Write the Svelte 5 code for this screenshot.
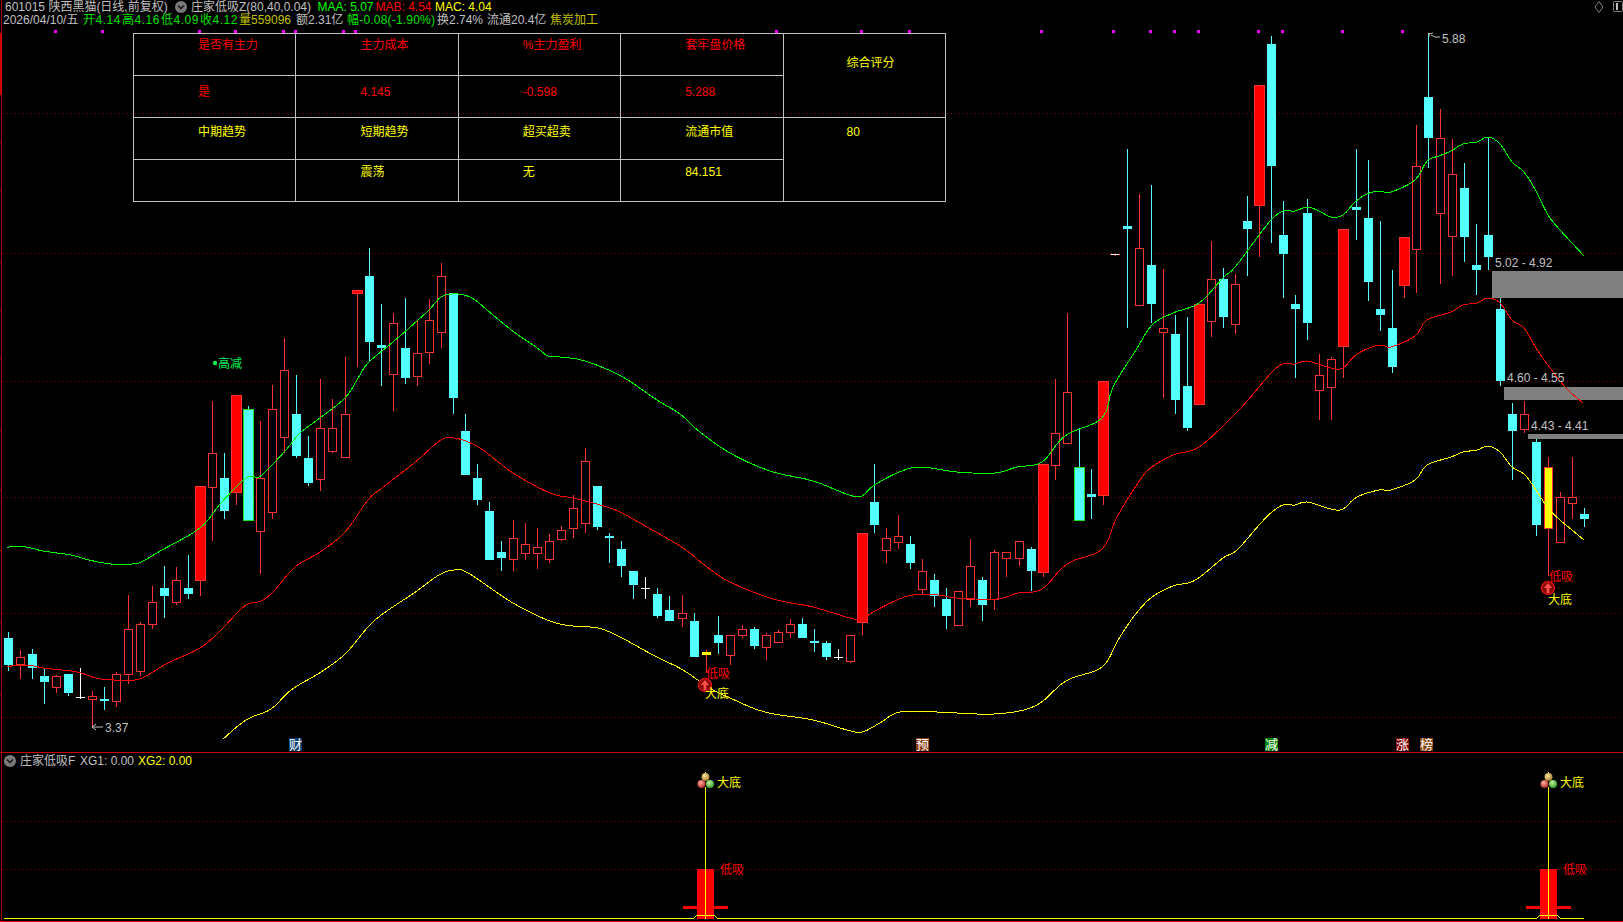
<script>
  const cyan = '#54ffff';
  // [kind, high, bodyTop, bodyBottom, low]; c cyan, r hollow red, R solid red, g cyan with green edge, w white doji, y flat yellow, Y yellow with red edge, d dash
  const raw = [
    ['c',632,638,665,671],['r',650,657,664,679],['c',649,654,668,679],['c',669,676,682,704],['r',675,676,687,693],['c',674,674,693,696],
    ['w',668,697,698,699],['r',691,696,699,727],['c',687,699,701,710],['r',672,674,701,707],['r',595,629,674,684],['r',622,624,671,676],
    ['r',586,602,624,629],['c',566,588,596,618],['r',567,580,602,605],['c',555,588,594,599],['R',486,486,580,596],['r',401,453,487,541],
    ['c',453,478,511,519],['R',395,395,492,505],['g',406,409,520,520],['r',421,478,531,574],['r',385,409,512,519],['r',338,370,437,453],
    ['c',375,414,456,458],['c',436,458,483,486],['r',379,428,479,491],['r',399,428,451,453],['r',357,414,457,457],['R',290,290,293,367],
    ['c',248,276,342,362],['c',304,345,348,386],['r',313,323,374,411],['c',298,348,378,384],['r',321,353,376,386],['r',299,320,352,364],
    ['r',263,276,332,348],['c',293,293,398,414],['c',414,431,475,475],['c',464,478,500,505],['c',502,511,560,560],['c',541,552,558,571],
    ['r',520,538,559,571],['r',523,544,553,560],['r',528,547,553,569],['r',534,541,559,563],['r',526,530,539,541],['r',495,508,528,538],
    ['r',448,461,523,533],['c',486,486,527,530],['c',533,536,538,563],['c',541,549,566,577],['c',571,571,585,599],['w',577,588,589,599],
    ['c',588,594,616,618],['c',596,610,621,621],['r',595,613,618,627],['c',613,621,657,657],['y',650,652,655,673],['c',616,635,643,654],
    ['r',635,635,655,665],['r',625,629,635,638],['c',627,629,646,649],['r',633,635,647,660],['r',630,632,642,643],['r',619,624,632,638],
    ['c',618,624,638,638],['c',629,641,643,652],['c',641,643,657,660],['w',649,657,658,660],['r',635,635,661,663],['R',533,533,622,635],
    ['c',464,502,525,533],['r',528,538,550,563],['r',515,536,542,549],['c',536,544,563,569],['r',559,571,589,594],['c',574,580,596,607],
    ['c',588,599,616,629],['r',591,591,625,625],['r',539,566,599,607],['c',577,580,605,621],['r',550,552,599,610],['r',552,552,558,577],
    ['r',541,541,558,566],['c',547,549,571,591],['R',464,464,572,577],['r',379,433,465,480],['r',313,392,443,443],['g',428,467,520,520],
    ['c',469,494,497,519],['R',381,381,495,505],['d',254,254,256,256],['c',149,226,229,328],['r',194,248,305,305],['c',185,265,304,323],
    ['r',269,328,332,398],['c',315,334,400,414],['c',317,386,428,431],['R',304,304,404,404],['r',241,279,321,337],['c',268,279,317,328],
    ['r',274,284,324,334],['c',196,221,229,276],['R',85,85,205,257],['c',36,44,166,243],['c',201,235,254,298],['c',295,304,309,378],
    ['c',199,213,323,340],['r',354,375,390,420],['r',357,359,387,420],['R',229,229,346,378],['c',149,207,210,240],['c',160,218,282,301],
    ['c',221,309,315,331],['c',270,328,367,373],['R',237,237,285,298],['r',125,166,249,293],['c',33,97,138,168],['r',109,138,213,284],
    ['r',139,174,236,276],['c',163,188,237,262],['c',224,265,270,295],['c',137,235,257,270],['c',298,309,381,386],['c',403,414,431,480],
    ['r',401,414,429,433],['c',439,442,525,536],['Y',457,467,528,576],['r',492,497,542,542],['r',457,497,503,519],['c',508,514,519,527]
  ];
  const candles = raw.map(([kind, high, top, bottom, low], i) => ({
    kind, high, top, bottom, low, x: Math.round(7.5 + 12.036 * i)
  }));
  const wickColour = { c: cyan, g: cyan, w: '#ffffff', r: '#ff3232', R: '#ff3232', y: '#ff3232', Y: '#ff3232', d: '#ff3232' };

  // Catmull-Rom through the read-off points, resampled so that the averages curve as they do on the terminal
  function smooth(a) {
    const out = [];
    for (let i = 0; i < a.length - 1; i++) {
      const p0 = a[Math.max(i - 1, 0)], p1 = a[i], p2 = a[i + 1], p3 = a[Math.min(i + 2, a.length - 1)];
      const steps = Math.max(2, Math.round((p2[0] - p1[0]) / 3));
      for (let s = 0; s < steps; s++) {
        const t = s / steps, t2 = t * t, t3 = t2 * t;
        const f = (k) => 0.5 * (2 * p1[k] + (p2[k] - p0[k]) * t + (2 * p0[k] - 5 * p1[k] + 4 * p2[k] - p3[k]) * t2 + (3 * p1[k] - p0[k] - 3 * p2[k] + p3[k]) * t3);
        out.push(`${f(0).toFixed(1)},${f(1).toFixed(1)}`);
      }
    }
    const last = a[a.length - 1];
    out.push(last.join(','));
    return out.join(' ');
  }
  const green = smooth([[7,547],[26,547],[43,551],[71,555],[89,560],[111,564],[132,564],[141,562],[162,550],[200,528],[221,503],[246,478],[259,477],[270,467],[286,450],[300,433],[320,418],[345,398],[357,380],[368,363],[393,342],[418,320],[429,310],[441,297],[452,294],[464,295],[475,300],[493,315],[514,332],[536,347],[548,356],[560,357],[585,361],[621,376],[657,400],[680,414],[700,432],[730,453],[770,471],[813,481],[849,495],[862,496],[873,486],[897,473],[920,467],[957,472],[995,473],[1017,467],[1042,462],[1065,436],[1102,418],[1113,387],[1136,350],[1152,325],[1173,313],[1199,303],[1223,278],[1235,267],[1260,234],[1272,219],[1283,211],[1295,211],[1307,207],[1319,211],[1331,217],[1343,215],[1355,202],[1367,194],[1379,191],[1391,192],[1415,180],[1427,161],[1439,156],[1451,151],[1463,144],[1477,142],[1488,137],[1500,144],[1512,162],[1524,172],[1536,191],[1548,215],[1560,230],[1572,243],[1584,256]]);
  const red = smooth([[7,666],[34,666],[43,668],[77,672],[96,678],[114,680],[139,679],[168,663],[200,648],[220,631],[238,612],[248,604],[261,601],[273,592],[295,567],[320,552],[345,532],[368,500],[382,488],[414,463],[441,440],[454,438],[468,442],[483,450],[513,473],[550,493],[573,498],[600,505],[620,512],[647,527],[683,548],[707,567],[730,582],[773,599],[813,607],[850,618],[862,619],[873,612],[897,600],[913,595],[938,595],[957,598],[997,599],[1018,593],[1042,589],[1067,564],[1102,549],[1117,517],[1140,480],[1152,467],[1173,455],[1199,447],[1233,416],[1248,400],[1272,372],[1283,364],[1295,364],[1307,361],[1331,368],[1343,368],[1357,354],[1379,345],[1391,347],[1415,336],[1427,320],[1451,312],[1463,305],[1477,303],[1488,298],[1500,303],[1512,320],[1524,328],[1536,348],[1548,365],[1565,387],[1583,403]]);
  const yellow = smooth([[223,739],[246,720],[271,709],[291,690],[321,672],[345,654],[368,627],[384,613],[414,593],[439,575],[454,570],[468,573],[513,603],[550,621],[573,626],[598,628],[620,637],[653,655],[683,670],[708,687],[730,698],[765,712],[813,720],[847,730],[862,732],[880,723],[900,712],[937,712],[994,714],[1035,706],[1066,681],[1102,667],[1118,640],[1135,615],[1152,597],[1173,586],[1188,583],[1200,577],[1223,558],[1237,550],[1260,524],[1272,512],[1283,505],[1295,505],[1307,502],[1331,509],[1343,509],[1357,497],[1379,490],[1391,490],[1415,480],[1427,465],[1451,457],[1463,452],[1477,450],[1488,446],[1500,452],[1512,467],[1524,474],[1536,490],[1548,508],[1560,520],[1572,530],[1584,540]]);

  const gridMain = [113, 253, 381, 497, 613, 717];
  const gridSub = [821, 869];
  const marks = [55,102,199,235,283,295,343,355,776,861,909,1041,1113,1150,1174,1198,1258,1282,1342,1402];
  const axisTicks = [142,190,262,310,358,430,490,550,622,694];
  const zones = [
    { x: 1492, y: 271, h: 27, label: '5.02 - 4.92', lx: 1495, ly: 267 },
    { x: 1504, y: 387, h: 13, label: '4.60 - 4.55', lx: 1507, ly: 382 },
    { x: 1528, y: 434, h: 5, label: '4.43 - 4.41', lx: 1531, ly: 430 }
  ];
  const badges = [
    { x: 289, t: '财', c: '#0a3f73' },
    { x: 916, t: '预', c: '#8a3c14' },
    { x: 1265, t: '减', c: '#008000' },
    { x: 1396, t: '涨', c: '#800000' },
    { x: 1420, t: '榜', c: '#804000' }
  ];
  const lows = [
    { cx: 705, cy: 685, tx: 706, ty1: 678, ty2: 698 },
    { cx: 1548, cy: 588, tx: 1549, ty1: 581, ty2: 604 }
  ];
  const signals = [
    { x: 705, big: 717, small: 720 },
    { x: 1548, big: 1560, small: 1563 }
  ];
  const table = [
    { cls: 'red r1', cells: ['是否有主力', '主力成本', '%主力盈利', '套牢盘价格'] },
    { cls: 'red r2', cells: ['是', '4.145', '-0.598', '5.288'] },
    { cls: 'yel r3', cells: ['中期趋势', '短期趋势', '超买超卖', '流通市值'] },
    { cls: 'yel r4', cells: ['', '震荡', '无', '84.151'] }
  ];
</script>

{#snippet chevron()}
  <svg class="chev" width="12" height="12" viewBox="0 0 12 12">
    <circle cx="6" cy="6" r="6" fill="#7a7a7a" />
    <path d="M3 4.5 L6 7.5 L9 4.5" fill="none" stroke="#1c1c1c" stroke-width="1.6" />
  </svg>
{/snippet}

<div class="terminal">
  <section class="main-pane">
    <svg class="canvas" width="1623" height="752" viewBox="0 0 1623 752">
      <g shape-rendering="crispEdges">
        {#each gridMain as y}
          <line x1="3" x2="1623" y1={y + 0.5} y2={y + 0.5} class="grid" />
        {/each}
        <line x1="1.5" x2="1.5" y1="0" y2="752" stroke="#b00000" />
        <rect x="0" y="33" width="2" height="62" fill="#d00000" />
        {#each axisTicks as y}
          <line x1="0" x2="2" y1={y + 0.5} y2={y + 0.5} stroke="#b00000" />
        {/each}
        {#each marks as x}
          <rect x={x - 1} y="30" width="3" height="3" fill="#ff00ff" />
        {/each}

        {#each candles as c}
          <line x1={c.x + 0.5} x2={c.x + 0.5} y1={c.high} y2={c.low} stroke={wickColour[c.kind]} />
          {#if c.kind === 'c'}
            <rect x={c.x - 4} y={c.top} width="9" height={c.bottom - c.top} fill={cyan} />
          {:else if c.kind === 'r'}
            <rect x={c.x - 3.5} y={c.top + 0.5} width="8" height={c.bottom - c.top} fill="#000" stroke="#ff3232" />
          {:else if c.kind === 'R'}
            <rect x={c.x - 4.5} y={c.top + 0.5} width="10" height={c.bottom - c.top} fill="#ff0000" stroke="#ff3232" />
          {:else if c.kind === 'g'}
            <rect x={c.x - 4.5} y={c.top + 0.5} width="10" height={c.bottom - c.top} fill={cyan} stroke="#22e022" />
          {:else if c.kind === 'w'}
            <rect x={c.x - 4} y={c.top} width="9" height="1" fill="#ffffff" />
          {:else if c.kind === 'y'}
            <rect x={c.x - 4} y={c.top} width="9" height={c.bottom - c.top} fill="#ffff00" />
          {:else if c.kind === 'Y'}
            <rect x={c.x - 3.5} y={c.top + 0.5} width="8" height={c.bottom - c.top} fill="#ffff00" stroke="#ff3232" />
          {:else if c.kind === 'd'}
            <rect x={c.x - 5} y={c.top} width="10" height="1" fill="#ff3232" />
            <rect x={c.x - 4} y={c.top} width="8" height="1" fill="#ffffff" />
          {/if}
        {/each}

        {#each zones as z}
          <rect x={z.x} y={z.y} width={1623 - z.x} height={z.h} fill="#808080" />
        {/each}

        <polyline points={green} class="ma" stroke="#00ff00" />
        <polyline points={red} class="ma" stroke="#ff0000" />
        <polyline points={yellow} class="ma" stroke="#ffff00" />

        {#each badges as b}
          <rect x={b.x} y="738" width="13" height="13" fill={b.c} />
        {/each}
      </g>

      {#each zones as z}
        <text x={z.lx} y={z.ly} class="label">{z.label}</text>
      {/each}
      {#each badges as b}
        <text x={b.x} y="749" class="label badge">{b.t}</text>
      {/each}

      <circle cx="215" cy="363" r="2.2" fill="#00f050" />
      <text x="218" y="368" class="label" style:fill="#00f050">高减</text>

      <path d="M92 727 H103 M92 727 L96 724 M92 727 L96 730" stroke="#c0c0c0" fill="none" />
      <text x="105" y="732" class="label">3.37</text>
      <path d="M1429 33 V37 M1429 34 L1433 33 M1431 35 L1435 37 L1440 37" stroke="#c0c0c0" fill="none" />
      <text x="1442" y="43" class="label">5.88</text>

      {#each lows as l}
        <circle cx={l.cx} cy={l.cy} r="6.5" fill="#8a0a0a" stroke="#d81010" stroke-width="1.4" />
        <path d={`M${l.cx} ${l.cy - 5} L${l.cx + 4} ${l.cy} H${l.cx + 1.3} V${l.cy + 5} H${l.cx - 1.3} V${l.cy} H${l.cx - 4} Z`} fill="#ff5050" />
        <text x={l.tx} y={l.ty1} class="label" style:fill="#ff0000">低吸</text>
        <text x={l.tx - 1} y={l.ty2} class="label" style:fill="#ffff00">大底</text>
      {/each}
    </svg>

    <div class="hdr first">
      <span class="gray">601015 陕西黑猫(日线,前复权)</span>
      {@render chevron()}
      <span class="gray">庄家低吸Z(80,40,0.04)</span>
      <span class="grn">MAA: 5.07</span>
      <span class="red">MAB: 4.54</span>
      <span class="yel">MAC: 4.04</span>
    </div>
    <div class="hdr second">
      <span class="gray">2026/04/10/五</span>
      <span class="ohlc">开4.14</span>
      <span class="ohlc">高4.16</span>
      <span class="ohlc">低4.09</span>
      <span class="ohlc">收4.12</span>
      <span class="olive">量559096</span>
      <span class="gray">额2.31亿</span>
      <span class="grn2">幅-0.08(-1.90%)</span>
      <span class="gray">换2.74%</span>
      <span class="gray">流通20.4亿</span>
      <span class="olive">焦炭加工</span>
    </div>

    <div class="controls">
      <svg width="12" height="12" viewBox="0 0 12 12"><path d="M6 0.5 L10 6 L6 11.5 L2 6 Z" fill="none" stroke="#808080" /></svg>
      <svg width="10" height="11" viewBox="0 0 10 11"><rect x="0.5" y="0.5" width="9" height="10" rx="1" fill="none" stroke="#808080" /><rect x="3" y="2" width="2" height="7" fill="#c0c0c0" /></svg>
    </div>

    <table class="stats">
      <tbody>
        {#each table as row, i}
          <tr>
            {#each row.cells as cell}
              <td class={row.cls}>{cell}</td>
            {/each}
            {#if i === 0}
              <td class="yel score-title" rowspan="2">综合评分</td>
            {:else if i === 2}
              <td class="yel score" rowspan="2">80</td>
            {/if}
          </tr>
        {/each}
      </tbody>
    </table>
  </section>

  <section class="sub-pane">
    <svg class="canvas" width="1623" height="168" viewBox="0 753 1623 168">
      <defs>
        <radialGradient id="ballGold" cx="0.4" cy="0.35" r="0.7"><stop offset="0" stop-color="#ffe9a0" /><stop offset="1" stop-color="#9a7420" /></radialGradient>
        <radialGradient id="ballRed" cx="0.4" cy="0.35" r="0.7"><stop offset="0" stop-color="#ffb0a0" /><stop offset="1" stop-color="#b02020" /></radialGradient>
        <radialGradient id="ballGreen" cx="0.4" cy="0.35" r="0.7"><stop offset="0" stop-color="#c8f0a0" /><stop offset="1" stop-color="#289a20" /></radialGradient>
      </defs>
      <g shape-rendering="crispEdges">
        {#each gridSub as y}
          <line x1="3" x2="1623" y1={y + 0.5} y2={y + 0.5} class="grid" />
        {/each}
        <line x1="1.5" x2="1.5" y1="753" y2="921" stroke="#b00000" />
        {#each signals as s}
          <rect x={s.x - 8} y="869" width="17" height="50" fill="#ff0000" />
          <rect x={s.x - 22} y="906" width="45" height="3" fill="#ff0000" />
          <rect x={s.x} y="787" width="1" height="132" fill="#ffff00" />
        {/each}
        <polyline points="4,918 694,918 697,915 714,915 717,918 1537,918 1540,915 1557,915 1560,918 1584,918" class="ma" stroke="#ffff00" />
      </g>
      {#each signals as s}
        <path d={`M${s.x + 0.5} 772 V776`} stroke="#ffe080" />
        <circle cx={s.x + 0.5} cy="777" r="4" fill="url(#ballGold)" />
        <circle cx={s.x - 3.5} cy="784" r="4" fill="url(#ballRed)" />
        <circle cx={s.x + 5} cy="784" r="4" fill="url(#ballGreen)" />
        <text x={s.big} y="787" class="label" style:fill="#ffff00">大底</text>
        <text x={s.small} y="874" class="label" style:fill="#ff0000">低吸</text>
      {/each}
    </svg>
    <div class="hdr sub">
      {@render chevron()}
      <span class="gray">庄家低吸F</span>
      <span class="gray">XG1: 0.00</span>
      <span class="yel">XG2: 0.00</span>
    </div>
  </section>
</div>

<style>
  :global(body) {
    margin: 0;
    background: #000;
  }
  .terminal {
    width: 1623px;
    height: 922px;
    display: flex;
    flex-direction: column;
    background: #000;
    overflow: hidden;
    font: 12px/14px "Liberation Sans", "Noto Sans CJK SC", sans-serif;
    color: #c0c0c0;
  }
  .main-pane {
    position: relative;
    height: 752px;
    flex: none;
    border-bottom: 1px solid #c80000;
  }
  .sub-pane {
    position: relative;
    flex: 1;
    border-bottom: 1px solid #e00000;
  }
  .canvas {
    position: absolute;
    left: 0;
    top: 0;
    display: block;
  }
  .grid {
    stroke: #800000;
    stroke-dasharray: 1 3;
  }
  .ma {
    fill: none;
    stroke-width: 1;
  }
  .label {
    font: 12px "Liberation Sans", "Noto Sans CJK SC", sans-serif;
    fill: #c0c0c0;
  }
  .badge {
    font-size: 13px;
    fill: #fff;
  }
  .hdr {
    position: relative;
    display: grid;
    align-items: center;
    white-space: nowrap;
    height: 14px;
  }
  .first {
    padding-left: 5px;
    grid-template-columns: 170px 16px 126.5px 58px 59.5px auto;
  }
  .second {
    margin-top: -1px;
    padding-left: 3px;
    grid-template-columns: 80px 39px 39px 39px 39px 57px 51px 90px 50px 63px auto;
  }
  .sub {
    padding: 1px 0 0 4px;
    grid-template-columns: 16px 60px 58px auto;
  }
  .gray { color: #c0c0c0; }
  .grn { color: #00ff00; }
  .grn2 { color: #00e000; letter-spacing: 0.2px; }
  .ohlc { color: #00e000; letter-spacing: 0.5px; }
  .olive { color: #c0c000; }
  .red { color: #ff0000; }
  .yel { color: #ffff00; }
  .chev { display: block; }
  .controls {
    position: absolute;
    right: 0;
    top: 1px;
    display: flex;
    gap: 8px;
  }
  .stats {
    position: absolute;
    left: 133px;
    top: 33px;
    width: 813px;
    table-layout: fixed;
    border-collapse: collapse;
  }
  .stats tr {
    height: 42px;
  }
  .stats td {
    border: 1px solid #c0c0c0;
    padding: 4px 0 0 64px;
    vertical-align: top;
    box-sizing: border-box;
  }
  .stats td.r2 {
    padding-top: 9px;
  }
  .stats td.r3 {
    padding-top: 7px;
  }
  .stats td.r4 {
    padding-top: 5px;
  }
  .stats td.score-title {
    padding-top: 22px;
    padding-left: 63px;
  }
  .stats td.score {
    padding-top: 7px;
    padding-left: 63px;
  }
</style>
